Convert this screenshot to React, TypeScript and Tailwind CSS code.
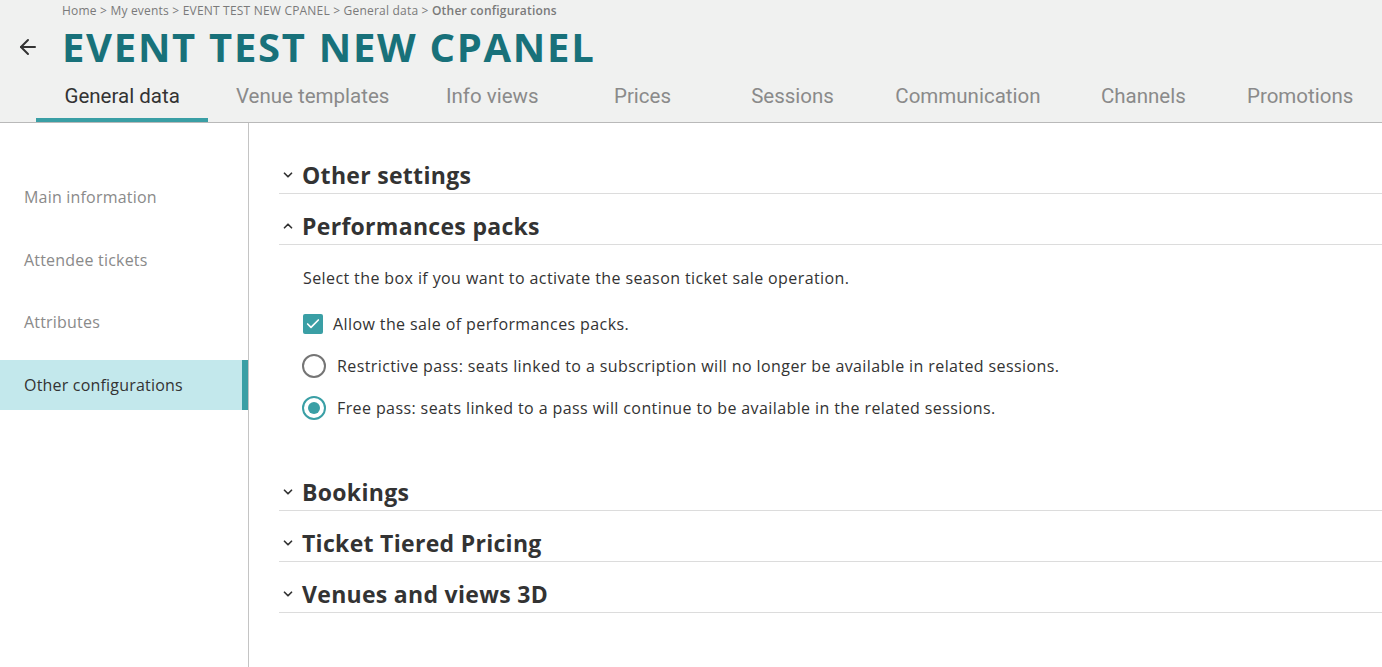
import { ArrowLeft, ChevronDown, ChevronUp, Check } from "lucide-react";

const TABS = [
  "General data",
  "Venue templates",
  "Info views",
  "Prices",
  "Sessions",
  "Communication",
  "Channels",
  "Promotions",
];

const SIDE = ["Main information", "Attendee tickets", "Attributes", "Other configurations"];

const body = { fontFamily: "'Open Sans', 'Noto Sans', sans-serif" };
const head = { fontFamily: "'Open Sans', 'Noto Sans', sans-serif" };
const tabFont = { fontFamily: "Roboto, 'Noto Sans', sans-serif" };

function SectionHeader({ title, open }: { title: string; open?: boolean }) {
  const Icon = open ? ChevronUp : ChevronDown;
  return (
    <div className="flex items-center h-[51px] pt-[14px] border-b border-[#dcdcdc]">
      <Icon className="w-[14px] h-[14px] text-[#333] ml-[2px] mr-[7px]" strokeWidth={3} />
      <span className="text-[23px] font-bold text-[#333] tracking-[0.3px]" style={head}>
        {title}
      </span>
    </div>
  );
}

export default function App() {
  return (
    <div className="w-[1382px] h-[667px] overflow-hidden bg-white flex flex-col" style={body}>
      <header className="bg-[#f0f1f0] border-b border-[#b9b9b9] h-[123px] flex flex-col overflow-hidden">
        <div className="pl-[62px] pt-[3px] text-[12px] text-[#7a7a7a] leading-[16px] tracking-[0.2px]">
          Home &gt; My events &gt; EVENT TEST NEW CPANEL &gt; General data &gt;{" "}
          <span className="font-semibold">Other configurations</span>
        </div>
        <div className="flex items-center h-[56px] pl-[16px]">
          <ArrowLeft className="w-[24px] h-[24px] text-[#333] mr-[22px]" strokeWidth={2} />
          <h1 className="text-[40px] font-bold text-[#18717a] tracking-[1.7px] leading-none" style={head}>
            EVENT TEST NEW CPANEL
          </h1>
        </div>
        <nav className="flex pl-[36px] mt-auto" style={tabFont}>
          {TABS.map((t, i) => (
            <div
              key={t}
              className={
                i === 0
                  ? "min-w-[150px] px-[31px] h-[47px] flex items-center justify-center text-[20.5px] text-[#333] border-b-[4px] border-[#3a9fa5] whitespace-nowrap"
                  : "min-w-[150px] px-[31px] h-[47px] flex items-center justify-center text-[20.5px] text-[#8a8a8a] border-b-[4px] border-transparent whitespace-nowrap"
              }
            >
              {t}
            </div>
          ))}
        </nav>
      </header>

      <div className="flex flex-1 min-h-0">
        <aside className="w-[249px] border-r border-[#c4c4c4] pt-[49px] flex flex-col">
          {SIDE.map((s, i) => (
            <div
              key={s}
              className={
                i === SIDE.length - 1
                  ? "h-[50px] mb-[12.5px] flex items-center pl-[24px] text-[16px] tracking-[0.2px] text-[#333] bg-[#c3e8ec] border-r-[6px] border-[#3a9fa5]"
                  : "h-[50px] mb-[12.5px] flex items-center pl-[24px] text-[16px] tracking-[0.2px] text-[#8a8a8a]"
              }
            >
              {s}
            </div>
          ))}
        </aside>

        <main className="flex-1 pl-[30px] pt-[20px]">
          <SectionHeader title="Other settings" />
          <SectionHeader title="Performances packs" open />
          <div className="pl-[24px] pt-[22px] pb-[41px] text-[16px] tracking-[0.4px] text-[#333]">
            <p className="h-[22px] flex items-center">
              Select the box if you want to activate the season ticket sale operation.
            </p>
            <label className="flex items-center mt-[24px] h-[22px]">
              <span className="w-[20px] h-[20px] rounded-[2px] bg-[#3a9fa5] flex items-center justify-center mr-[10px]">
                <Check className="w-[16px] h-[16px] text-white" strokeWidth={2.5} />
              </span>
              Allow the sale of performances packs.
            </label>
            <label className="flex items-center mt-[20px] h-[22px]">
              <span className="w-[24px] h-[24px] rounded-full border-2 border-[#757575] mr-[11px] -ml-[1px]" />
              Restrictive pass: seats linked to a subscription will no longer be available in related sessions.
            </label>
            <label className="flex items-center mt-[20px] h-[22px]">
              <span className="w-[24px] h-[24px] rounded-full border-2 border-[#3a9fa5] mr-[11px] -ml-[1px] flex items-center justify-center">
                <span className="w-[12px] h-[12px] rounded-full bg-[#3a9fa5]" />
              </span>
              Free pass: seats linked to a pass will continue to be available in the related sessions.
            </label>
          </div>
          <SectionHeader title="Bookings" />
          <SectionHeader title="Ticket Tiered Pricing" />
          <SectionHeader title="Venues and views 3D" />
        </main>
      </div>
    </div>
  );
}
